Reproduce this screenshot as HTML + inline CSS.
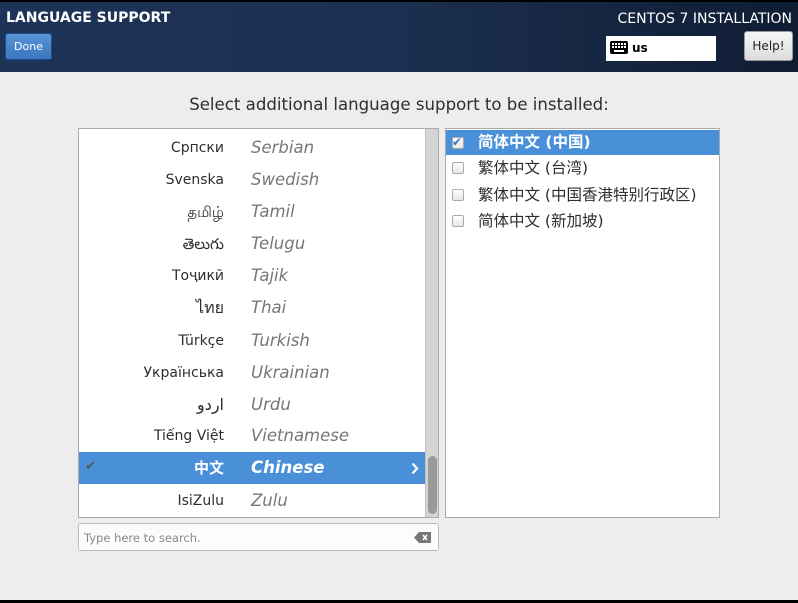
<!DOCTYPE html>
<html><head><meta charset="utf-8"><style>
*{margin:0;padding:0;box-sizing:border-box}
body{width:798px;height:603px;background:#ededed;position:relative;overflow:hidden;font-family:"DejaVu Sans","Liberation Sans","Noto Sans CJK SC",sans-serif;}
.hdr{position:absolute;left:0;top:0;width:798px;height:72px;background:linear-gradient(90deg,#1d3358 0%,#1b2f50 50%,#0f1d33 100%);border-top:2px solid #000}
.abs{position:absolute}
.t1{left:6px;top:10px;color:#fff;font-weight:bold;font-size:14px}
.t2{right:6px;top:11px;color:#fff;font-size:14px}
.done{left:5px;top:33px;width:47px;height:27px;background:linear-gradient(#5a94d6,#3a76c0);border:1px solid #1e4f8c;border-radius:3px;color:#fff;font-size:11px;text-align:center;line-height:25px}
.kb{left:606px;top:36px;width:110px;height:25px;background:#fff}
.help{left:744px;top:31px;width:49px;height:30px;background:linear-gradient(#f6f6f6,#dcdcdc);border:1px solid #999;border-radius:3px;font-size:12px;text-align:center;line-height:28px;color:#222}
.title{left:0;width:798px;top:95px;text-align:center;font-size:16.6px;color:#2e2e2e}
.list{left:78px;top:128px;width:361px;height:390px;background:#fff;border:1px solid #aaa;overflow:hidden}
.row{position:absolute;left:0;width:346px;height:32px}
.nat{position:absolute;right:201px;top:0;line-height:32px;font-size:14px;color:#2e2e2e;white-space:nowrap}
.en{position:absolute;left:172px;top:0;line-height:32px;font-size:16.5px;font-style:italic;color:#777;white-space:nowrap}
.sel{background:#4a90d9}
.sel .nat{color:#fff;font-weight:bold}
.sel .en{color:#fff;font-weight:bold}
.trough{position:absolute;left:346px;top:0;width:14px;height:390px;background:#d4d4d4;border-left:1px solid #c0c0c0}
.thumb{position:absolute;left:349px;top:327px;width:9px;height:58px;background:#9a9a9a;border-radius:5px}
.rl{left:445px;top:128px;width:275px;height:390px;background:#fff;border:1px solid #aaa}
.rr{position:absolute;left:0;width:273px;height:26px;line-height:26px;font-size:15.5px;color:#2e2e2e;padding-left:32px;white-space:nowrap}
.cb{position:absolute;left:6px;top:7px;width:12px;height:12px;border:1px solid #aaa;border-radius:2px;background:linear-gradient(#fff,#e6e6e6)}
.search{left:78px;top:523px;width:361px;height:28px;background:linear-gradient(#fafafa,#fff);border:1px solid #bbb;border-radius:3px;font-size:11.5px;color:#888;padding-left:5px;line-height:28px}
</style></head><body>
<div class="hdr"></div>
<div class="abs t1">LANGUAGE SUPPORT</div>
<div class="abs t2">CENTOS 7 INSTALLATION</div>
<div class="abs done">Done</div>
<div class="abs kb"><svg class="abs" style="left:4px;top:5px" width="18" height="13"><rect x="0" y="0" width="18" height="13" rx="2" fill="#000"/><g fill="#fff"><rect x="2" y="2" width="2" height="2"/><rect x="5" y="2" width="2" height="2"/><rect x="8" y="2" width="2" height="2"/><rect x="11" y="2" width="2" height="2"/><rect x="14" y="2" width="2" height="2"/><rect x="2" y="5" width="2" height="2"/><rect x="5" y="5" width="2" height="2"/><rect x="8" y="5" width="2" height="2"/><rect x="11" y="5" width="2" height="2"/><rect x="14" y="5" width="2" height="2"/><rect x="4" y="9" width="10" height="2"/></g></svg><span class="abs" style="left:26px;top:5px;font-weight:bold;font-size:12px">us</span></div>
<div class="abs help">Help!</div>
<div class="abs title">Select additional language support to be installed:</div>
<div class="abs list">
<div class="row" style="top:3px"><span class="nat">Српски</span><span class="en">Serbian</span></div>
<div class="row" style="top:35px"><span class="nat">Svenska</span><span class="en">Swedish</span></div>
<div class="row" style="top:67px"><span class="nat" style="font-size:15px">தமிழ்</span><span class="en">Tamil</span></div>
<div class="row" style="top:99px"><span class="nat" style="font-size:15px">తెలుగు</span><span class="en">Telugu</span></div>
<div class="row" style="top:131px"><span class="nat">Тоҷикӣ</span><span class="en">Tajik</span></div>
<div class="row" style="top:163px"><span class="nat" style="font-size:16px">ไทย</span><span class="en">Thai</span></div>
<div class="row" style="top:196px"><span class="nat">Türkçe</span><span class="en">Turkish</span></div>
<div class="row" style="top:228px"><span class="nat">Українська</span><span class="en">Ukrainian</span></div>
<div class="row" style="top:260px"><span class="nat" style="font-size:16px">اردو</span><span class="en">Urdu</span></div>
<div class="row" style="top:291px"><span class="nat">Tiếng Việt</span><span class="en">Vietnamese</span></div>
<div class="row sel" style="top:323px"><span class="abs" style="left:6px;top:7px;color:#555;font-size:13px">✔</span><span class="nat" style="font-size:15px">中文</span><span class="en">Chinese</span><svg class="abs" style="left:332px;top:10px" width="8" height="13"><path d="M1.5 1.5L6 6.5L1.5 11.5" stroke="#fff" stroke-width="2.2" fill="none"/></svg></div>
<div class="row" style="top:356px"><span class="nat">IsiZulu</span><span class="en">Zulu</span></div>
<div class="trough"></div><div class="thumb"></div>
</div>
<div class="abs rl">
<div class="rr" style="top:1px;height:25px;line-height:25px;background:#4a90d9;color:#fff;font-weight:bold"><span class="cb"></span><span class="abs" style="left:6px;top:0;color:#3a70c0;font-size:12px">✔</span>简体中文 (中国)</div>
<div class="rr" style="top:26px"><span class="cb"></span>繁体中文 (台湾)</div>
<div class="rr" style="top:53px"><span class="cb"></span>繁体中文 (中国香港特别行政区)</div>
<div class="rr" style="top:79px"><span class="cb"></span>简体中文 (新加坡)</div>
</div>
<div class="abs search">Type here to search.<svg class="abs" style="left:335px;top:8px" width="17" height="11"><path d="M5 0H17V11H5L0 5.5Z" fill="#777"/><path d="M9 3L13 8M13 3L9 8" stroke="#fff" stroke-width="1.6"/></svg></div>
<div class="abs" style="left:0;top:600px;width:798px;height:3px;background:#000"></div>
</body></html>
